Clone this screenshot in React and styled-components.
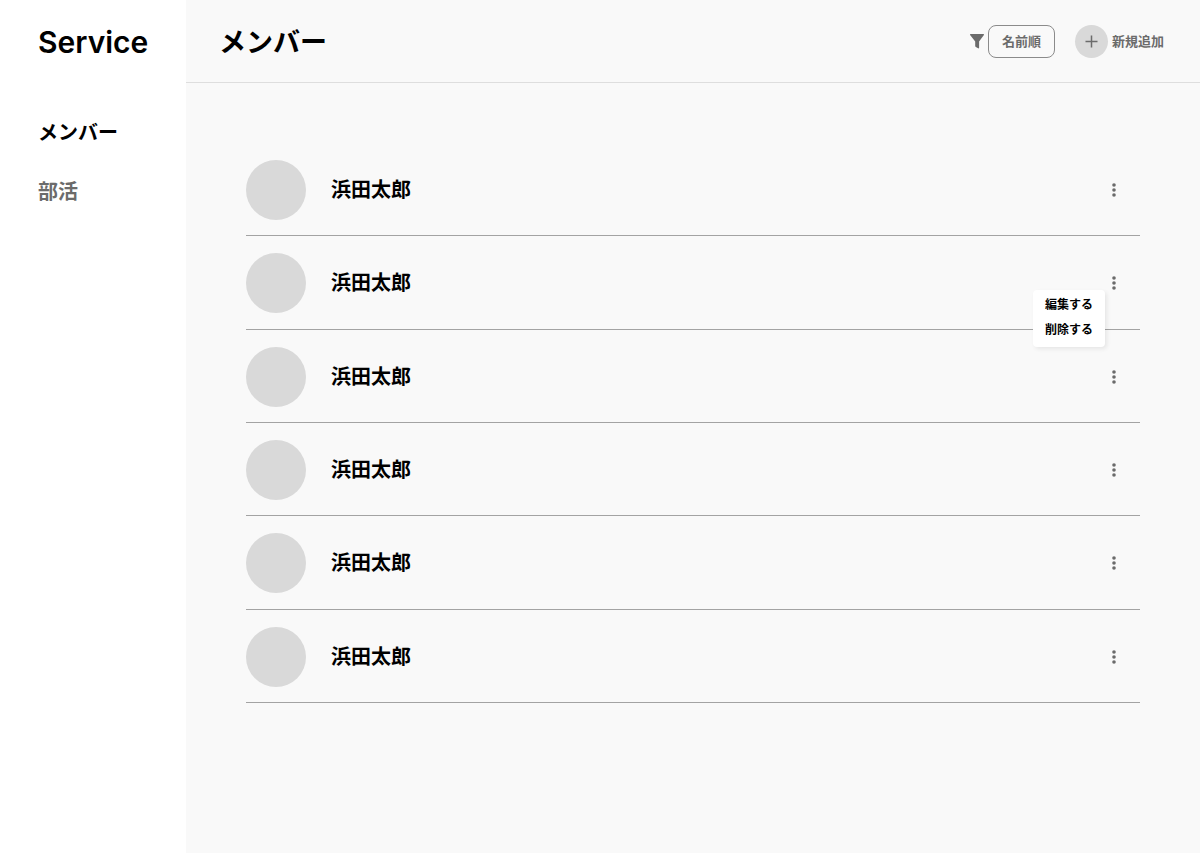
import React from 'react';
import styled, { createGlobalStyle } from 'styled-components';

const GlobalStyle = createGlobalStyle`
  * {
    box-sizing: border-box;
  }

  body {
    margin: 0;
    color: #000;
    background: #f9f9f9;
    font-family: Inter, 'Noto Sans CJK JP', sans-serif;
    font-weight: 600;
  }

  button {
    font: inherit;
    color: inherit;
    padding: 0;
    border: none;
    background: none;
    cursor: pointer;
  }
`;

const Container = styled.div`
  display: grid;
  grid-template-columns: 186px 1fr;
  min-height: 100vh;
`;

const Sidebar = styled.aside`
  padding-left: 38px;
  background: #fff;
`;

const Logo = styled.div`
  display: flex;
  align-items: center;
  height: 83px;
  font-size: 30px;
`;

const Nav = styled.nav`
  display: flex;
  flex-direction: column;
  gap: 30px;
  margin-top: 36px;
`;

const NavLink = styled.a`
  font-size: 20px;
  line-height: 29px;
  text-decoration: none;
  color: ${({ $active }) => ($active ? '#000' : '#6b6b6b')};
`;

const Header = styled.header`
  display: flex;
  align-items: center;
  justify-content: space-between;
  height: 83px;
  padding: 0 36px 0 33px;
  border-bottom: 1px solid #dedede;
`;

const Title = styled.h1`
  margin: 0;
  padding-top: 4px;
  font-size: 27px;
  line-height: 40px;
  font-weight: 600;
`;

const Actions = styled.div`
  display: flex;
  align-items: center;
  gap: 20px;
  font-size: 13px;
  line-height: 20px;
  color: #6b6b6b;
`;

const Sort = styled.div`
  display: flex;
  align-items: center;
  gap: 4px;
`;

const SortButton = styled.button`
  width: 67px;
  height: 33px;
  border: 1px solid #8b8b8b;
  border-radius: 8px;
`;

const AddButton = styled.button`
  display: flex;
  align-items: center;
  gap: 4px;
`;

const AddIcon = styled.span`
  display: flex;
  align-items: center;
  justify-content: center;
  width: 33px;
  height: 33px;
  border-radius: 50%;
  background: #d9d9d9;
`;

const MemberList = styled.ul`
  display: grid;
  grid-auto-rows: 1fr;
  min-height: 560px;
  margin: 60px;
  padding: 0;
  list-style: none;
`;

const MemberRow = styled.li`
  display: flex;
  align-items: center;
  padding: 2px 14px 0 0;
  border-bottom: 1px solid #a3a3a3;
`;

const Avatar = styled.div`
  width: 60px;
  height: 60px;
  margin-right: 25px;
  border-radius: 50%;
  background: #d9d9d9;
`;

const Name = styled.span`
  flex: 1;
  font-size: 20px;
  line-height: 30px;
`;

const MenuWrapper = styled.div`
  position: relative;
`;

const MenuButton = styled.button`
  display: flex;
  align-items: center;
  justify-content: center;
  width: 24px;
  height: 24px;
  color: #6b6b6b;
`;

const Menu = styled.div`
  position: absolute;
  z-index: 1;
  top: 19px;
  right: 21px;
  display: flex;
  flex-direction: column;
  gap: 7px;
  padding: 6px 12px 8px;
  border-radius: 4px;
  background: #fff;
  box-shadow: 2px 2px 4px rgba(0, 0, 0, 0.08);
`;

const MenuItem = styled.button`
  font-size: 12px;
  line-height: 18px;
  white-space: nowrap;
`;

const members = [
  { id: 1, name: '浜田太郎' },
  { id: 2, name: '浜田太郎', menuOpen: true },
  { id: 3, name: '浜田太郎' },
  { id: 4, name: '浜田太郎' },
  { id: 5, name: '浜田太郎' },
  { id: 6, name: '浜田太郎' },
];

const FilterIcon = () => (
  <svg width="14" height="16" viewBox="0 0 14 16" fill="currentColor" aria-hidden="true">
    <path d="M.5 1h13c.5 0 .6.5.4.9L9.1 8.4v6.3c0 .6-.5.8-1 .6l-2.3-1.2c-.4-.2-.6-.5-.6-1V8.4L.1 1.9C-.1 1.5 0 1 .5 1z" />
  </svg>
);

const PlusIcon = () => (
  <svg width="13" height="13" viewBox="0 0 13 13" fill="none" stroke="#6b6b6b" strokeWidth="1.5" aria-hidden="true">
    <path d="M6.5.5v12M.5 6.5h12" />
  </svg>
);

const DotsIcon = () => (
  <svg width="4" height="14" viewBox="0 0 4 14" fill="currentColor" aria-hidden="true">
    <circle cx="2" cy="2" r="1.8" />
    <circle cx="2" cy="7" r="1.8" />
    <circle cx="2" cy="12" r="1.8" />
  </svg>
);

export default function App() {
  return (
    <Container>
      <GlobalStyle />
      <Sidebar>
        <Logo>Service</Logo>
        <Nav>
          <NavLink href="#members" $active>メンバー</NavLink>
          <NavLink href="#clubs">部活</NavLink>
        </Nav>
      </Sidebar>
      <main>
        <Header>
          <Title>メンバー</Title>
          <Actions>
            <Sort>
              <FilterIcon />
              <SortButton type="button">名前順</SortButton>
            </Sort>
            <AddButton type="button">
              <AddIcon>
                <PlusIcon />
              </AddIcon>
              新規追加
            </AddButton>
          </Actions>
        </Header>
        <MemberList>
          {members.map(({ id, name, menuOpen }) => (
            <MemberRow key={id}>
              <Avatar />
              <Name>{name}</Name>
              <MenuWrapper>
                <MenuButton type="button" aria-label="メニュー" aria-expanded={!!menuOpen}>
                  <DotsIcon />
                </MenuButton>
                {menuOpen && (
                  <Menu>
                    <MenuItem type="button">編集する</MenuItem>
                    <MenuItem type="button">削除する</MenuItem>
                  </Menu>
                )}
              </MenuWrapper>
            </MemberRow>
          ))}
        </MemberList>
      </main>
    </Container>
  );
}
